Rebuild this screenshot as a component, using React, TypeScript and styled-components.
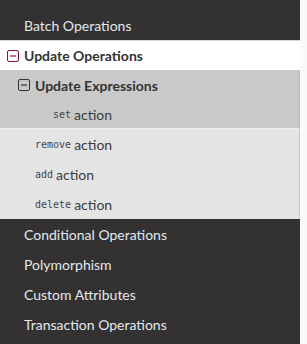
import React from "react";
import { createGlobalStyle, styled } from "styled-components";

type Item = { label: string; code?: string };

const topItems: Item[] = [{ label: "Batch Operations" }];
const bottomItems: Item[] = [
  { label: "Conditional Operations" },
  { label: "Polymorphism" },
  { label: "Custom Attributes" },
  { label: "Transaction Operations" },
];
const subActions: Item[] = [
  { code: "remove", label: "action" },
  { code: "add", label: "action" },
  { code: "delete", label: "action" },
];

function MinusBox({ color }: { color: string }) {
  return (
    <svg width="12" height="12" viewBox="0 0 12 12">
      <rect x="0.5" y="0.5" width="11" height="11" rx="1.5" fill="none" stroke={color} strokeWidth="1" />
      <line x1="3" y1="6" x2="9" y2="6" stroke={color} strokeWidth="1.2" />
    </svg>
  );
}

function App() {
  return (
    <>
      <GlobalStyle />
      <StSidebar>
        {topItems.map((item) => (
          <StDarkRow key={item.label}>{item.label}</StDarkRow>
        ))}
        <StActiveRow>
          <MinusBox color="#7a1c3c" />
          Update Operations
        </StActiveRow>
        <StGroup>
          <StGroupRow>
            <MinusBox color="#333" />
            Update Expressions
          </StGroupRow>
          <StLeafRow $indent={53} $height={28}>
            <StCode>set</StCode>
            action
          </StLeafRow>
        </StGroup>
        <StSubGroup>
          {subActions.map((item) => (
            <StLeafRow key={item.code} $indent={35} $height={30}>
              <StCode>{item.code}</StCode>
              {item.label}
            </StLeafRow>
          ))}
        </StSubGroup>
        {bottomItems.map((item) => (
          <StDarkRow key={item.label}>{item.label}</StDarkRow>
        ))}
      </StSidebar>
    </>
  );
}

export default App;

const GlobalStyle = createGlobalStyle`
  body {
    margin: 0;
    background: #fafafa;
    font-family: Lato, "Liberation Sans", sans-serif;
  }
`;

const StSidebar = styled.nav`
  width: 300px;
  height: 344px;
  background: #333131;
  padding-top: 10px;
  box-sizing: border-box;
  overflow: hidden;
`;

const StDarkRow = styled.div`
  height: 30px;
  display: flex;
  align-items: center;
  padding-left: 24px;
  font-size: 14px;
  color: #e3e9ee;
`;

const StActiveRow = styled.div`
  height: 30px;
  box-sizing: border-box;
  display: flex;
  align-items: center;
  gap: 5px;
  padding-left: 7px;
  background: #fff;
  border-top: 1px solid #d8d8d8;
  font-size: 14px;
  font-weight: 700;
  color: #333;
`;

const StGroup = styled.div`
  background: #c9c9c9;
  border-right: 1px solid #bbb;
`;

const StGroupRow = styled.div`
  height: 30px;
  display: flex;
  align-items: center;
  gap: 5px;
  padding-left: 18px;
  font-size: 14px;
  font-weight: 700;
  color: #333;
`;

const StSubGroup = styled.div`
  background: #e4e4e4;
  border-top: 1px solid #ededed;
  border-right: 1px solid #c8c8c8;
`;

const StLeafRow = styled.div<{ $indent: number; $height: number }>`
  height: ${(p) => p.$height}px;
  display: flex;
  align-items: center;
  gap: 3px;
  padding-left: ${(p) => p.$indent}px;
  font-size: 14px;
  color: #3a3a3a;
`;

const StCode = styled.code`
  font-family: "DejaVu Sans Mono", "Liberation Mono", monospace;
  font-size: 10px;
  color: #444;
  padding-top: 1px;
`;
